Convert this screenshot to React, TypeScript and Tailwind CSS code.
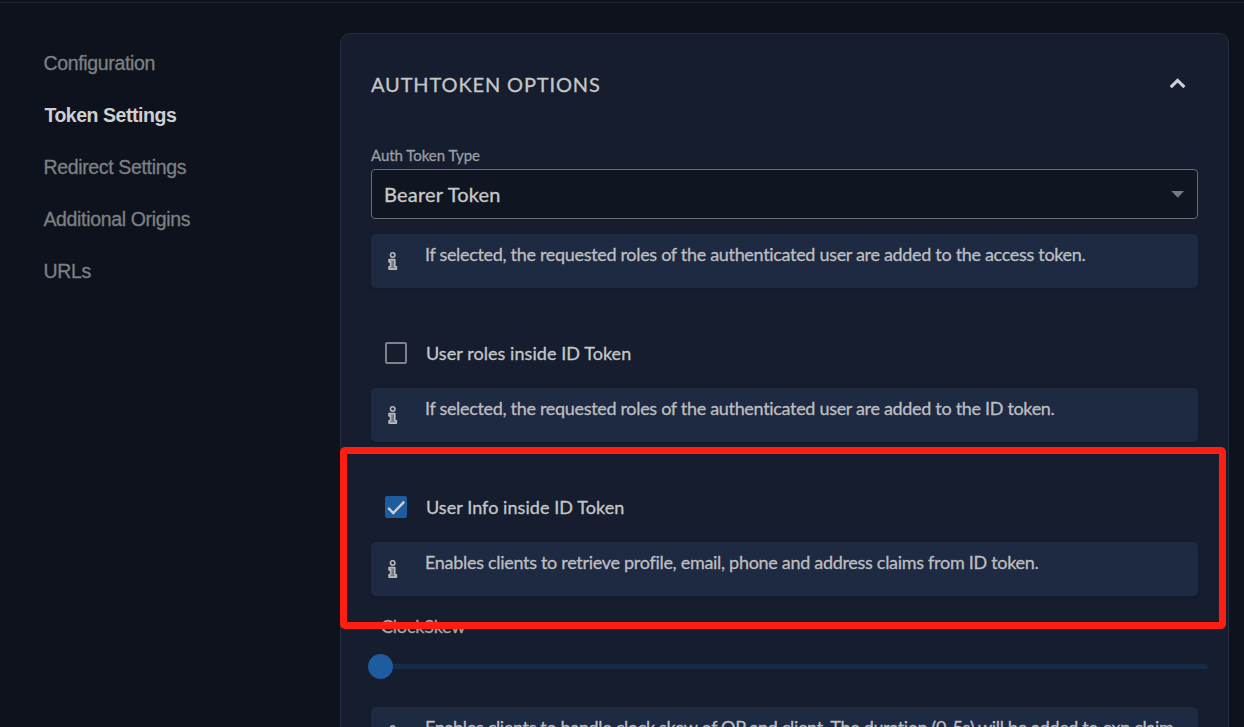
import type { ReactNode } from "react";

const navItems = ["Configuration", "Token Settings", "Redirect Settings", "Additional Origins", "URLs"];

function InfoIcon() {
  return (
    <svg className="mt-[18px] ml-[17px] h-[18px] w-[10px] shrink-0" viewBox="0 0 10 18" fill="none" stroke="#b9babc" strokeWidth="1.6">
      <circle cx="4.7" cy="3" r="2.2" />
      <path d="M1 7.6h5.8v7.1h1.6v2.4H1v-2.4h1.6V9.9H1z" fill="#6f7789" strokeLinejoin="round" />
    </svg>
  );
}

function InfoBox({ children, spacing }: { children: ReactNode; spacing: string }) {
  return (
    <div className="flex h-[54px] shrink-0 rounded-[5px] bg-[#1e2942] shadow-[0_2px_4px_rgba(0,0,0,0.12)]">
      <InfoIcon />
      <p className={`mt-[8px] ml-[27px] text-[18px] leading-6 whitespace-nowrap text-[#bdbec0] [-webkit-text-stroke:0.3px_#bdbec0] ${spacing}`}>
        {children}
      </p>
    </div>
  );
}

function CheckRow({ label, checked }: { label: string; checked?: boolean }) {
  return (
    <div className="flex h-[22px] shrink-0 items-center pl-[14px]">
      {checked ? (
        <div className="size-[22px] rounded-[2px] bg-[#1d5c9f]">
          <svg className="size-[22px]" viewBox="0 0 22 22" fill="none" stroke="#d0d1d3" strokeWidth="2.4">
            <path d="M3.2 11.9 8.3 17 19.2 5.7" />
          </svg>
        </div>
      ) : (
        <div className="size-[22px] rounded-[2px] border-2 border-[#7d8289]" />
      )}
      <span className="ml-[19px] text-[18px] leading-6 tracking-[0.06px] whitespace-nowrap text-[#c5c6c7] [-webkit-text-stroke:0.3px_#c5c6c7]">
        {label}
      </span>
    </div>
  );
}

export default function App() {
  return (
    <div className="relative flex h-[727px] w-[1244px] flex-col overflow-hidden bg-[#0e121d] font-['Lato',sans-serif] [font-variant-ligatures:none]">
      <div className="mt-[2px] h-px shrink-0 bg-[#22252f]" />
      <div className="flex pt-[30px]">
        <nav className="flex w-[340px] shrink-0 flex-col gap-7 pt-[18px] pl-[43.4px] font-['Liberation_Sans',sans-serif]">
          {navItems.map((item) => (
            <a
              key={item}
              className={
                item === "Token Settings"
                  ? "pl-px text-[19.5px] leading-6 font-bold tracking-[-0.46px] whitespace-nowrap text-[#cfd0d1]"
                  : "text-[19.5px] leading-6 tracking-[-0.34px] whitespace-nowrap text-[#7d8083] [-webkit-text-stroke:0.3px_#7d8083]"
              }
            >
              {item}
            </a>
          ))}
        </nav>
        <section className="flex h-[760px] w-[889px] flex-col rounded-[10px] border border-[#262f40] bg-[#151d2f] px-[30px]">
          <header className="mt-[35px] flex h-[30px] shrink-0 items-center justify-between pr-[12px]">
            <h2 className="text-[20px] leading-[30px] tracking-[0.87px] text-[#c5c6c7] [-webkit-text-stroke:0.3px_#c5c6c7]">AUTHTOKEN OPTIONS</h2>
            <svg className="-mt-px h-[11px] w-4" viewBox="0 0 16 11" fill="none" stroke="#d0d1d3" strokeWidth="3.1">
              <path d="M.8 9.2 7.6 2.4l6.8 6.8" />
            </svg>
          </header>
          <label className="mt-[46px] h-5 shrink-0 text-[15px] leading-5 tracking-[-0.04px] text-[#9b9da1] [-webkit-text-stroke:0.3px_#9b9da1]">Auth Token Type</label>
          <div className="mt-[4px] flex h-[50px] shrink-0 items-center justify-between rounded-[4px] border border-[#686c73] bg-[#0f1621] pr-[13px] pl-[12px]">
            <span className="-mt-px text-[20px] leading-[26px] tracking-[0.22px] text-[#c8c9ca] [-webkit-text-stroke:0.3px_#c8c9ca]">Bearer Token</span>
            <svg className="h-[7px] w-[13px]" viewBox="0 0 13 7" fill="#76797e">
              <path d="M0.3 0h12.7L6.8 6.7z" />
            </svg>
          </div>
          <div className="mt-[15px]">
            <InfoBox spacing="tracking-[-0.315px]">If selected, the requested roles of the authenticated user are added to the access token.</InfoBox>
          </div>
          <div className="mt-[54px]">
            <CheckRow label="User roles inside ID Token" />
          </div>
          <div className="mt-[24px]">
            <InfoBox spacing="tracking-[-0.315px]">If selected, the requested roles of the authenticated user are added to the ID token.</InfoBox>
          </div>
          <div className="mt-[54px]">
            <CheckRow label="User Info inside ID Token" checked />
          </div>
          <div className="mt-[24px]">
            <InfoBox spacing="tracking-[-0.3px]">Enables clients to retrieve profile, email, phone and address claims from ID token.</InfoBox>
          </div>
          <div className="mt-[19px] h-[22px] shrink-0 pl-[10px] text-[18px] leading-[22px] tracking-[-0.2px] text-[#a5a7aa] [-webkit-text-stroke:0.3px_#a5a7aa]">
            ClockSkew
          </div>
          <div className="mt-[17px] -mr-[10px] -ml-[3px] flex h-[25px] shrink-0 items-center">
            <div className="size-[25px] shrink-0 rounded-full bg-[#1d5c9f]" />
            <div className="h-[5px] flex-1 rounded-r-full bg-[#162b46]" />
          </div>
          <div className="mt-[28px]">
            <InfoBox spacing="tracking-[-0.34px]">Enables clients to handle clock skew of OP and client. The duration (0-5s) will be added to exp claim</InfoBox>
          </div>
        </section>
      </div>
      <div className="absolute top-[447px] left-[340px] h-[182px] w-[886px] rounded-[5px] bg-[#ff1f12] [clip-path:path(evenodd,'M0_0H886V182H0ZM7_7V175H879V7Z')]" />
    </div>
  );
}
